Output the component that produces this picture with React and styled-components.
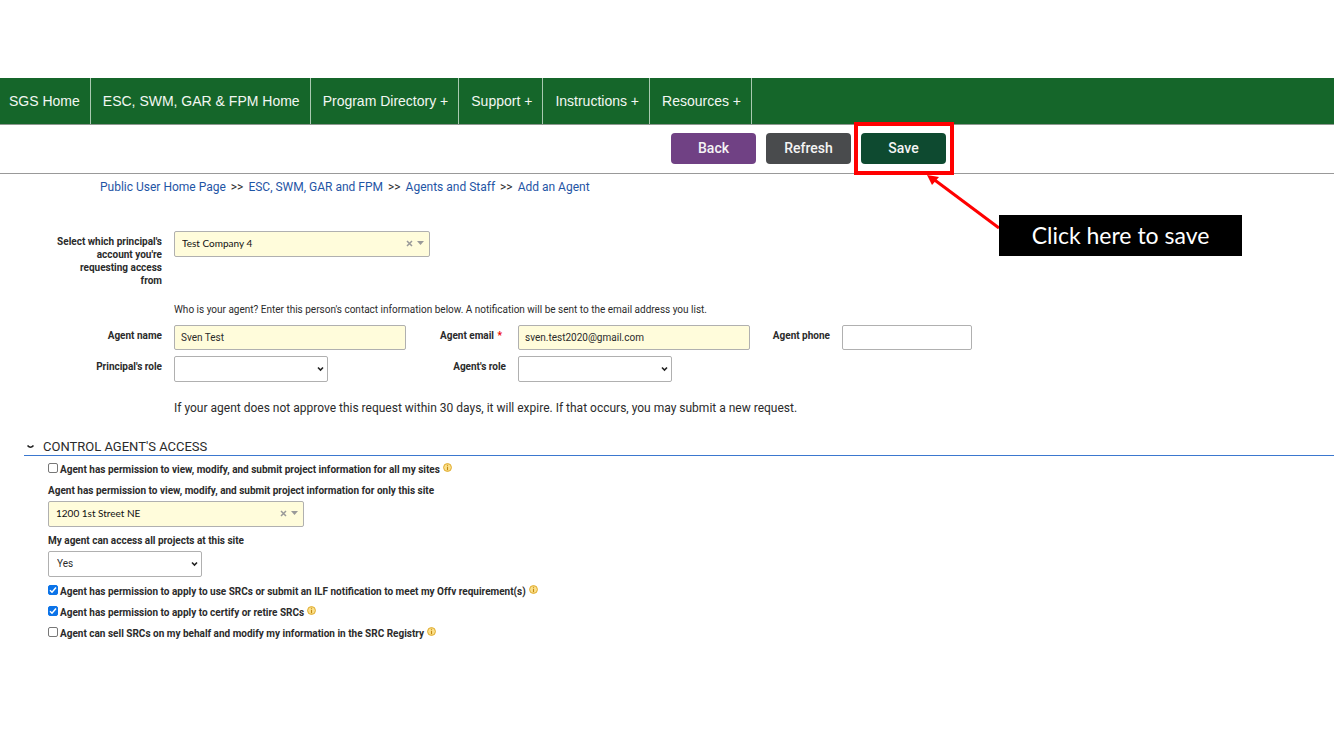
import React from "react";
import styled, { createGlobalStyle } from "styled-components";

const Global = createGlobalStyle`
  *, *::before, *::after { box-sizing: border-box; }
  body { margin: 0; background: #fff; color: #2b2b2b; font: 10px/13px Roboto, sans-serif; }
  button, input, select { font: inherit; color: inherit; }
`;

const Page = styled.div`
  padding-top: 78px;
`;

const Nav = styled.nav`
  display: flex;
  height: 47px;
  background: #15662a;
  border-bottom: 1px solid #8d978f;
`;

const NavLink = styled.a`
  display: flex;
  align-items: center;
  padding: 0 10px 0 ${(p) => (p.$first ? 9 : 12)}px;
  border-right: 1px solid #a9c9b0;
  color: #f2f7f2;
  font: 14px/20px "Liberation Sans", Arial, sans-serif;
  text-decoration: none;
  white-space: nowrap;
`;

const Toolbar = styled.div`
  display: flex;
  gap: 10px;
  height: 49px;
  padding: 8px 0 0 671px;
  border-bottom: 1px solid #999;
`;

const ToolButton = styled.button`
  width: 85px;
  height: 31px;
  padding: 0;
  border: 0;
  border-radius: 4px;
  background: ${(p) => p.$color};
  color: #f4f4f4;
  font-size: 14px;
  font-weight: 500;
`;

const Target = styled.div`
  position: relative;
  height: 31px;
`;

const Highlight = styled.div`
  position: absolute;
  top: -11px;
  left: -7px;
  width: 100px;
  height: 53px;
  border: 4px solid #f00;
  pointer-events: none;
`;

const Arrow = styled.svg`
  position: absolute;
  top: 41px;
  left: 65px;
`;

const Callout = styled.div`
  position: absolute;
  top: 82px;
  left: 138px;
  width: 243px;
  height: 41px;
  background: #000;
  color: #fff;
  font: 23px/40px Lato, sans-serif;
  text-align: center;
  white-space: nowrap;
`;

const Crumbs = styled.nav`
  display: flex;
  gap: 5px;
  padding: 5px 0 0 100px;
  font-size: 12px;
  line-height: 16px;
`;

const Crumb = styled.a`
  color: #1f55a5;
  text-decoration: none;
`;

const Form = styled.form`
  padding-top: 36px;
`;

const Row = styled.div`
  display: flex;
  align-items: flex-start;
  margin-bottom: ${(p) => p.$below || 0}px;
`;

const Label = styled.label`
  width: ${(p) => p.$width}px;
  margin-right: 12px;
  padding-top: 4px;
  font-weight: 700;
  text-align: right;
`;

const Required = styled.span`
  margin: 0 4px 0 1px;
  color: #e00;
`;

const TextField = styled.input`
  width: ${(p) => p.$width}px;
  height: 25px;
  padding: 0 6px;
  border: 1px solid #b0b0b0;
  border-radius: 2px;
  background: ${(p) => (p.$filled ? "#fffcdb" : "#fff")};
`;

const SelectBox = styled.div`
  position: relative;
  width: 154px;
  height: 26px;
`;

const Select = styled.select`
  appearance: none;
  width: 100%;
  height: 100%;
  padding: 0 8px 1px;
  border: 1px solid #b0b0b0;
  border-radius: 2px;
  background: #fff;
`;

const SelectChevron = styled.svg`
  position: absolute;
  right: 4px;
  top: 10px;
  pointer-events: none;
`;

const Combo = styled.div`
  display: flex;
  align-items: center;
  width: 256px;
  height: 26px;
  padding: 0 5px 2px 7px;
  border: 1px solid #b0b0b0;
  border-radius: 2px;
  background: #fffcdb;
`;

const ComboInput = styled.input`
  flex: 1;
  min-width: 0;
  padding: 0;
  border: 0;
  outline: 0;
  background: transparent;
  color: #111;
  font-family: Lato, sans-serif;
`;

const IconButton = styled.button`
  display: flex;
  margin-left: 4px;
  padding: 0;
  border: 0;
  background: none;
  color: #999;
`;

const Note = styled.p`
  margin: 0 0 ${(p) => p.$below}px 174px;
  font-size: ${(p) => p.$size}px;
  line-height: 16px;
`;

const SectionTitle = styled.h2`
  display: flex;
  align-items: center;
  gap: 8px;
  height: 17px;
  margin: 0 0 0 24px;
  padding-left: 2px;
  border-bottom: 1px solid #3b78cf;
  font-size: 13px;
  font-weight: 400;
  line-height: 16px;
`;

const Access = styled.section`
  padding: 6px 0 0 48px;
`;

const CheckRow = styled.div`
  display: flex;
  align-items: flex-start;
  height: ${(p) => p.$height}px;
  font-weight: 700;
`;

const Check = styled.input`
  appearance: none;
  display: grid;
  place-items: center;
  width: 10px;
  height: 10px;
  margin: 1px 2px 0 0;
  border: 1px solid #777;
  border-radius: 2px;
  background: #fff;
  &:checked {
    border-color: #0b73e8;
    background: #0b73e8 url("data:image/svg+xml,%3Csvg xmlns='http://www.w3.org/2000/svg' viewBox='0 0 8 8'%3E%3Cpath d='M1 4.2 3 6.2 7 1.5' fill='none' stroke='white' stroke-width='1.5'/%3E%3C/svg%3E") center / 8px no-repeat;
  }
`;

const CheckLabel = styled.label`
  padding-top: 1px;
`;

const InfoMark = styled.svg`
  margin: 1px 0 0 3px;
`;

const FieldLabel = styled.label`
  display: block;
  margin-bottom: ${(p) => p.$below}px;
  font-weight: 700;
`;

const navItems = ["SGS Home", "ESC, SWM, GAR & FPM Home", "Program Directory +", "Support +", "Instructions +", "Resources +"];
const crumbs = ["Public User Home Page", "ESC, SWM, GAR and FPM", "Agents and Staff", "Add an Agent"];

function Chevron() {
  return (
    <SelectChevron width="7" height="6" viewBox="0 0 7 6" aria-hidden="true">
      <path d="M1 1.5 3.5 4 6 1.5" fill="none" stroke="#222" strokeWidth="1.6" />
    </SelectChevron>
  );
}

function Dropdown({ id, value = "" }) {
  return (
    <SelectBox>
      <Select id={id} defaultValue={value}>
        <option value="" />
        <option>Yes</option>
        <option>No</option>
      </Select>
      <Chevron />
    </SelectBox>
  );
}

function ComboBox({ id, value }) {
  return (
    <Combo>
      <ComboInput id={id} defaultValue={value} />
      <IconButton type="button" aria-label="Clear">
        <svg width="7" height="7" viewBox="0 0 7 7"><path d="M1 1 6 6M6 1 1 6" stroke="currentColor" strokeWidth="1.5" /></svg>
      </IconButton>
      <IconButton type="button" aria-label="Open list">
        <svg width="7" height="4" viewBox="0 0 7 4"><path d="M0 0H7L3.5 4Z" fill="currentColor" /></svg>
      </IconButton>
    </Combo>
  );
}

function Permission({ id, checked, height, children }) {
  return (
    <CheckRow $height={height}>
      <Check type="checkbox" id={id} defaultChecked={checked} />
      <CheckLabel htmlFor={id}>{children}</CheckLabel>
      <InfoMark width="9" height="9" viewBox="0 0 8 8" aria-hidden="true">
        <circle cx="4" cy="4" r="3.5" fill="#fbe08c" stroke="#dda520" strokeWidth="0.8" />
        <path d="M4 1.5V2.5M4 3.3V6.5" stroke="#c58a10" />
      </InfoMark>
    </CheckRow>
  );
}

export default function App() {
  return (
    <Page>
      <Global />
      <Nav>
        {navItems.map((item, i) => (
          <NavLink key={item} href="#" $first={i === 0}>{item}</NavLink>
        ))}
      </Nav>
      <Toolbar>
        <ToolButton type="button" $color="#704184">Back</ToolButton>
        <ToolButton type="button" $color="#494b4d">Refresh</ToolButton>
        <Target>
          <ToolButton type="submit" form="agent" $color="#0e4a30">Save</ToolButton>
          <Highlight />
          <Arrow width="74" height="58" viewBox="0 0 74 58" aria-hidden="true">
            <path d="M6 4 73 54" stroke="#f00" strokeWidth="3" />
            <path d="M1 1 13 3 6 11Z" fill="#f00" />
          </Arrow>
          <Callout>Click here to save</Callout>
        </Target>
      </Toolbar>
      <Crumbs aria-label="Breadcrumb">
        {crumbs.map((c, i) => (
          <React.Fragment key={c}>
            {i > 0 && <span>&gt;&gt;</span>}
            <Crumb href="#">{c}</Crumb>
          </React.Fragment>
        ))}
      </Crumbs>
      <Form id="agent" onSubmit={(e) => e.preventDefault()}>
        <Row $below={15}>
          <Label htmlFor="principal" $width={162}>
            Select which principal's<br />account you're<br />requesting access<br />from
          </Label>
          <ComboBox id="principal" value="Test Company 4" />
        </Row>
        <Note $size={10} $below={7}>
          Who is your agent? Enter this person's contact information below. A notification will be sent to the email address you list.
        </Note>
        <Row $below={6}>
          <Label htmlFor="name" $width={162}>Agent name</Label>
          <TextField id="name" $width={232} $filled defaultValue="Sven Test" />
          <Label htmlFor="email" $width={100}>Agent email <Required>*</Required></Label>
          <TextField id="email" type="email" $width={232} $filled defaultValue="sven.test2020@gmail.com" />
          <Label htmlFor="phone" $width={80}>Agent phone</Label>
          <TextField id="phone" type="tel" $width={130} />
        </Row>
        <Row $below={18}>
          <Label htmlFor="principal-role" $width={162}>Principal's role</Label>
          <Dropdown id="principal-role" />
          <Label htmlFor="agent-role" $width={178}>Agent's role</Label>
          <Dropdown id="agent-role" />
        </Row>
        <Note $size={12} $below={23}>
          If your agent does not approve this request within 30 days, it will expire. If that occurs, you may submit a new request.
        </Note>
        <SectionTitle>
          <svg width="9" height="6" viewBox="0 0 9 6" aria-hidden="true"><path d="M1.5 1.5Q4.5 5 7.5 1.5" fill="none" stroke="#222" strokeWidth="1.5" /></svg>
          CONTROL AGENT'S ACCESS
        </SectionTitle>
        <Access>
          <Permission id="all-sites" height={22}>Agent has permission to view, modify, and submit project information for all my sites</Permission>
          <FieldLabel htmlFor="site" $below={4}>Agent has permission to view, modify, and submit project information for only this site</FieldLabel>
          <Row $below={7}><ComboBox id="site" value="1200 1st Street NE" /></Row>
          <FieldLabel htmlFor="projects" $below={4}>My agent can access all projects at this site</FieldLabel>
          <Row $below={7}><Dropdown id="projects" value="Yes" /></Row>
          <Permission id="ilf" checked height={21}>Agent has permission to apply to use SRCs or submit an ILF notification to meet my Offv requirement(s)</Permission>
          <Permission id="certify" checked height={21}>Agent has permission to apply to certify or retire SRCs</Permission>
          <Permission id="sell" height={21}>Agent can sell SRCs on my behalf and modify my information in the SRC Registry</Permission>
        </Access>
      </Form>
    </Page>
  );
}
